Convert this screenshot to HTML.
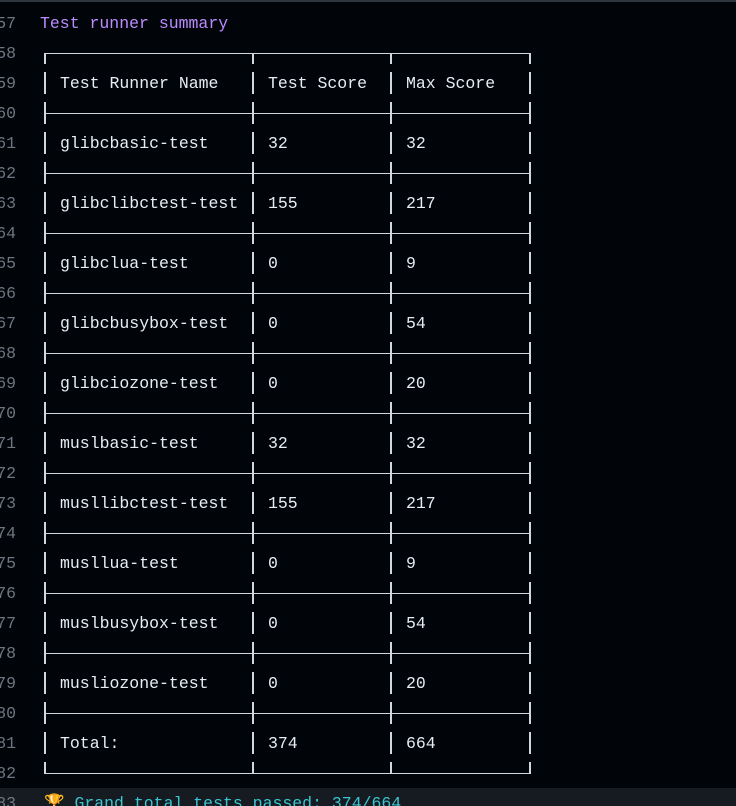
<!DOCTYPE html>
<html style="height:806px;overflow:hidden"><head><meta charset="utf-8"><style>
body{margin:0;width:736px;height:806px;background:#010409;overflow:hidden;position:relative;font-family:"Liberation Mono",monospace;font-size:16.5px;color:#e6edf3}
.top{position:absolute;left:0;top:0;width:736px;height:2px;background:#30363d}
.ln{position:absolute;right:720px;width:40px;text-align:right;color:#6e7681;height:30px;line-height:30px;white-space:nowrap}
.t{position:absolute;height:30px;line-height:30px;white-space:pre}
.h{position:absolute;height:1px;background:#d0d7de}
.v{position:absolute;width:2px;background:#d0d7de}
.hl{position:absolute;left:0;top:788px;width:736px;height:18px;background:#161b22}
#wrap{position:absolute;left:0;top:1px;width:736px;height:805px;overflow:hidden}
</style></head><body>
<div class="top"></div>
<div class="hl"></div>
<div id="wrap">
<div class="t" style="left:40px;top:8px;color:#bc8cff">Test runner summary</div>
<div class="t" style="left:60px;top:68px">Test Runner Name</div><div class="t" style="left:268px;top:68px">Test Score</div><div class="t" style="left:406px;top:68px">Max Score</div>
<div class="t" style="left:60px;top:128px">glibcbasic-test</div><div class="t" style="left:268px;top:128px">32</div><div class="t" style="left:406px;top:128px">32</div>
<div class="t" style="left:60px;top:188px">glibclibctest-test</div><div class="t" style="left:268px;top:188px">155</div><div class="t" style="left:406px;top:188px">217</div>
<div class="t" style="left:60px;top:248px">glibclua-test</div><div class="t" style="left:268px;top:248px">0</div><div class="t" style="left:406px;top:248px">9</div>
<div class="t" style="left:60px;top:308px">glibcbusybox-test</div><div class="t" style="left:268px;top:308px">0</div><div class="t" style="left:406px;top:308px">54</div>
<div class="t" style="left:60px;top:368px">glibciozone-test</div><div class="t" style="left:268px;top:368px">0</div><div class="t" style="left:406px;top:368px">20</div>
<div class="t" style="left:60px;top:428px">muslbasic-test</div><div class="t" style="left:268px;top:428px">32</div><div class="t" style="left:406px;top:428px">32</div>
<div class="t" style="left:60px;top:488px">musllibctest-test</div><div class="t" style="left:268px;top:488px">155</div><div class="t" style="left:406px;top:488px">217</div>
<div class="t" style="left:60px;top:548px">musllua-test</div><div class="t" style="left:268px;top:548px">0</div><div class="t" style="left:406px;top:548px">9</div>
<div class="t" style="left:60px;top:608px">muslbusybox-test</div><div class="t" style="left:268px;top:608px">0</div><div class="t" style="left:406px;top:608px">54</div>
<div class="t" style="left:60px;top:668px">musliozone-test</div><div class="t" style="left:268px;top:668px">0</div><div class="t" style="left:406px;top:668px">20</div>
<div class="t" style="left:60px;top:728px">Total:</div><div class="t" style="left:268px;top:728px">374</div><div class="t" style="left:406px;top:728px">664</div>
<div class="t" style="left:44px;top:788px;color:#39c5cf"><span style="color:#d29922">🏆</span> Grand total tests passed: 374/664</div>
<div class="ln" style="top:8px">57</div><div class="ln" style="top:38px">58</div><div class="ln" style="top:68px">59</div><div class="ln" style="top:98px">60</div><div class="ln" style="top:128px">61</div><div class="ln" style="top:158px">62</div><div class="ln" style="top:188px">63</div><div class="ln" style="top:218px">64</div><div class="ln" style="top:248px">65</div><div class="ln" style="top:278px">66</div><div class="ln" style="top:308px">67</div><div class="ln" style="top:338px">68</div><div class="ln" style="top:368px">69</div><div class="ln" style="top:398px">70</div><div class="ln" style="top:428px">71</div><div class="ln" style="top:458px">72</div><div class="ln" style="top:488px">73</div><div class="ln" style="top:518px">74</div><div class="ln" style="top:548px">75</div><div class="ln" style="top:578px">76</div><div class="ln" style="top:608px">77</div><div class="ln" style="top:638px">78</div><div class="ln" style="top:668px">79</div><div class="ln" style="top:698px">80</div><div class="ln" style="top:728px">81</div><div class="ln" style="top:758px">82</div><div class="ln" style="top:788px">83</div>
</div>
<div id="g"></div>
<script>
var g=document.getElementById('g'),h='';
var xs=[44,252,390,529];
h+='<div class="h" style="left:45px;width:485px;top:53px"></div>';
for(var i=0;i<11;i++)h+='<div class="h" style="left:45px;width:485px;top:'+(113+60*i)+'px"></div>';
h+='<div class="h" style="left:45px;width:485px;top:773px"></div>';
xs.forEach(function(x){
 h+='<div class="v" style="left:'+x+'px;top:53px;height:11px"></div>';
 for(var i=0;i<12;i++)h+='<div class="v" style="left:'+x+'px;top:'+(72+60*i)+'px;height:22px"></div>';
 for(var i=0;i<11;i++)h+='<div class="v" style="left:'+x+'px;top:'+(102+60*i)+'px;height:22px"></div>';
 h+='<div class="v" style="left:'+x+'px;top:762px;height:12px"></div>';
});
g.innerHTML=h;
</script>
</body></html>
